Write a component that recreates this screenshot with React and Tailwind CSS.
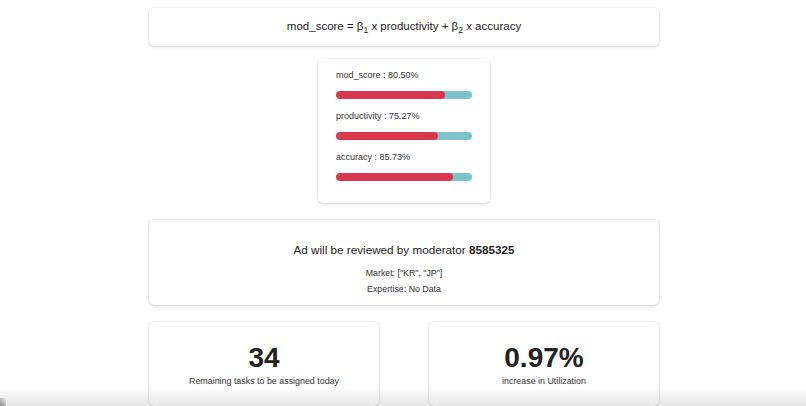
import React from "react";

const card = "bg-white rounded-[5px] shadow-[0_1px_3px_rgba(0,0,0,0.14),0_0_0_1px_rgba(0,0,0,0.04)]";

function Bar({ label, value }) {
  return (
    <div className="flex flex-col">
      <div className="text-[9px] leading-[14px] text-[#333]">{label} : {value.toFixed(2)}%</div>
      <div className="mt-[9px] h-[8px] w-full rounded-full bg-[#7cc4cc] overflow-hidden">
        <div className="h-full rounded-full bg-[#d9374f]" style={{ width: `${value}%` }} />
      </div>
    </div>
  );
}

export default function App() {
  return (
    <div className="relative w-full h-[406px] overflow-hidden bg-white font-['Liberation_Sans',Arial,sans-serif] text-[#222]">
      <div className="flex justify-center pl-[2px]">
        <div className="w-[510px] pt-[8px] flex flex-col">
          <div className={`${card} h-[38px] flex items-center justify-center text-[11.5px]`}>
            <span>
              mod_score = β<sub className="text-[8.5px]">1</sub> x productivity + β<sub className="text-[8.5px]">2</sub> x accuracy
            </span>
          </div>

          <div className={`${card} mt-[13px] mx-auto w-[172px] h-[144px] px-[18px] pt-[9px] flex flex-col gap-[10px]`}>
            <Bar label="mod_score" value={80.5} />
            <Bar label="productivity" value={75.27} />
            <Bar label="accuracy" value={85.73} />
          </div>

          <div className={`${card} mt-[17px] h-[85px] flex flex-col items-center pt-[22px]`}>
            <div className="text-[11.7px] leading-[16px] text-[#222]">
              Ad will be reviewed by moderator <span className="font-bold">8585325</span>
            </div>
            <div className="mt-[7px] text-[8.8px] leading-[16px] text-[#333]">Market: ["KR", "JP"]</div>
            <div className="text-[8.8px] leading-[16px] text-[#333]">Expertise: No Data</div>
          </div>

          <div className="mt-[17px] flex justify-between">
            <div className={`${card} w-[230px] h-[84px] flex flex-col items-center pt-[19px]`}>
              <div className="text-[28px] leading-[33px] font-bold text-[#222]">34</div>
              <div className="text-[8.9px] leading-[14px] text-[#333]">Remaining tasks to be assigned today</div>
            </div>
            <div className={`${card} w-[230px] h-[84px] flex flex-col items-center pt-[19px]`}>
              <div className="text-[28px] leading-[33px] font-bold text-[#222]">0.97%</div>
              <div className="text-[8.9px] leading-[14px] text-[#333]">increase in Utilization</div>
            </div>
          </div>
        </div>
      </div>

      <div className="pointer-events-none absolute inset-x-0 bottom-0 h-[20px] bg-gradient-to-b from-transparent to-black/10" />
      <div className="pointer-events-none absolute left-0 bottom-0 w-[6px] h-[8px] bg-gradient-to-tr from-black/40 to-transparent" />
    </div>
  );
}
